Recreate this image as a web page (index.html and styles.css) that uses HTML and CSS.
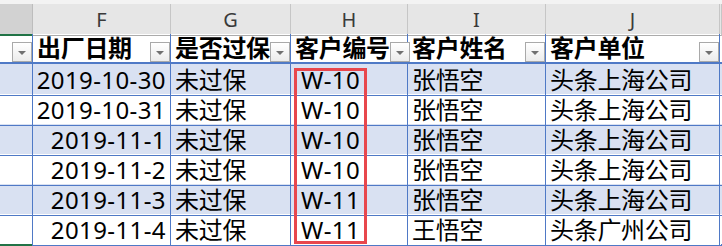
FILE: index.html
```html
<!DOCTYPE html>
<html lang="zh-CN">
<head>
<meta charset="utf-8">
<title>Sheet</title>
<link rel="stylesheet" href="styles.css">
</head>
<body>
<div class="sheet">
  <div class="top-strip"></div>
  <div class="row colhead">
    <div class="c sel"></div>
    <div class="c">F</div>
    <div class="c">G</div>
    <div class="c">H</div>
    <div class="c">I</div>
    <div class="c">J</div>
    <div class="c"></div>
  </div>
  <div class="row head">
    <div class="c"><span class="t"></span><span class="dd"></span></div>
    <div class="c"><span class="t">出厂日期</span><span class="dd"></span></div>
    <div class="c"><span class="t">是否过保</span><span class="dd"></span></div>
    <div class="c"><span class="t">客户编号</span><span class="dd"></span></div>
    <div class="c"><span class="t">客户姓名</span><span class="dd"></span></div>
    <div class="c"><span class="t">客户单位</span><span class="dd"></span></div>
    <div class="c"></div>
  </div>
  <div class="row data alt">
    <div class="c"></div><div class="c num">2019-10-30</div><div class="c">未过保</div><div class="c code">W-10</div><div class="c">张悟空</div><div class="c">头条上海公司</div><div class="c"></div>
  </div>
  <div class="row data">
    <div class="c"></div><div class="c num">2019-10-31</div><div class="c">未过保</div><div class="c code">W-10</div><div class="c">张悟空</div><div class="c">头条上海公司</div><div class="c"></div>
  </div>
  <div class="row data alt">
    <div class="c"></div><div class="c num">2019-11-1</div><div class="c">未过保</div><div class="c code">W-10</div><div class="c">张悟空</div><div class="c">头条上海公司</div><div class="c"></div>
  </div>
  <div class="row data">
    <div class="c"></div><div class="c num">2019-11-2</div><div class="c">未过保</div><div class="c code">W-10</div><div class="c">张悟空</div><div class="c">头条上海公司</div><div class="c"></div>
  </div>
  <div class="row data alt">
    <div class="c"></div><div class="c num">2019-11-3</div><div class="c">未过保</div><div class="c code">W-11</div><div class="c">张悟空</div><div class="c">头条上海公司</div><div class="c"></div>
  </div>
  <div class="row data">
    <div class="c"></div><div class="c num">2019-11-4</div><div class="c">未过保</div><div class="c code">W-11</div><div class="c">王悟空</div><div class="c">头条广州公司</div><div class="c"></div>
  </div>
  <div class="row tail">
    <div class="c sel"></div><div class="c"></div><div class="c"></div><div class="c"></div><div class="c"></div><div class="c"></div><div class="c"></div>
  </div>
  <div class="mark"></div>
</div>
</body>
</html>
```
FILE: styles.css
```css
html, body {
  margin: 0;
  padding: 0;
  background: #ffffff;
}
.sheet {
  position: relative;
  width: 722px;
  height: 246px;
  overflow: hidden;
  font-family: "Noto Sans", "Noto Sans CJK SC", sans-serif;
  color: #000;
}
.top-strip {
  height: 4px;
  background: #f3f3f3;
}
.row {
  display: grid;
  grid-template-columns: 33px 138px 120px 117px 138px 174px 1fr;
}
.c {
  box-sizing: border-box;
  border-right: 1px solid #4f79c6;
  white-space: nowrap;
}
.colhead {
  height: 30px;
  background: #e6e6e6;
}
.colhead .c {
  border-right: 1px solid #c6c6c6;
  border-bottom: 1px solid #ababab;
  text-align: center;
  font-family: "Noto Sans", sans-serif;
  font-size: 20px;
  line-height: 31px;
  color: #3a3a3a;
}
.colhead .c.sel {
  background: #d2d2d2;
  border-bottom: 2px solid #217346;
  border-right-color: #bdbdbd;
}
.head {
  border-bottom: 2px solid #4f79c6;
  height: 28px;
}
.head .c {
  display: flex;
  align-items: flex-end;
  justify-content: space-between;
  font-size: 24px;
  font-weight: bold;
  line-height: 28px;
  padding-left: 4px;
  letter-spacing: -0.3px;
}
.head .t {
  flex: 1;
}
.dd {
  flex: none;
  position: relative;
  box-sizing: border-box;
  width: 20px;
  height: 20px;
  border: 1px solid #a9a9a9;
  background: linear-gradient(#ffffff, #ececec);
}
.dd::after {
  content: "";
  position: absolute;
  left: 5px;
  top: 8px;
  border-left: 4px solid transparent;
  border-right: 4px solid transparent;
  border-top: 4px solid #707070;
}
.data {
  height: 30px;
}
.data .c {
  border-bottom: 1px solid #4f79c6;
  font-size: 24px;
  line-height: 31px;
  padding-left: 4px;
  letter-spacing: -0.3px;
}
.data .c.num {
  text-align: right;
  padding-left: 0;
  padding-right: 4px;
  letter-spacing: 0.4px;
}
.data .c.code {
  padding-left: 10px;
  letter-spacing: 0.4px;
}
.alt {
  background: #d9e1f2;
}
.tail {
  height: 2px;
}
.tail .c.sel {
  box-shadow: inset 0 2px 0 #217346;
}
.mark {
  position: absolute;
  left: 294px;
  top: 68px;
  width: 73px;
  height: 176px;
  box-sizing: border-box;
  border: 3px solid #e8474d;
}
```
